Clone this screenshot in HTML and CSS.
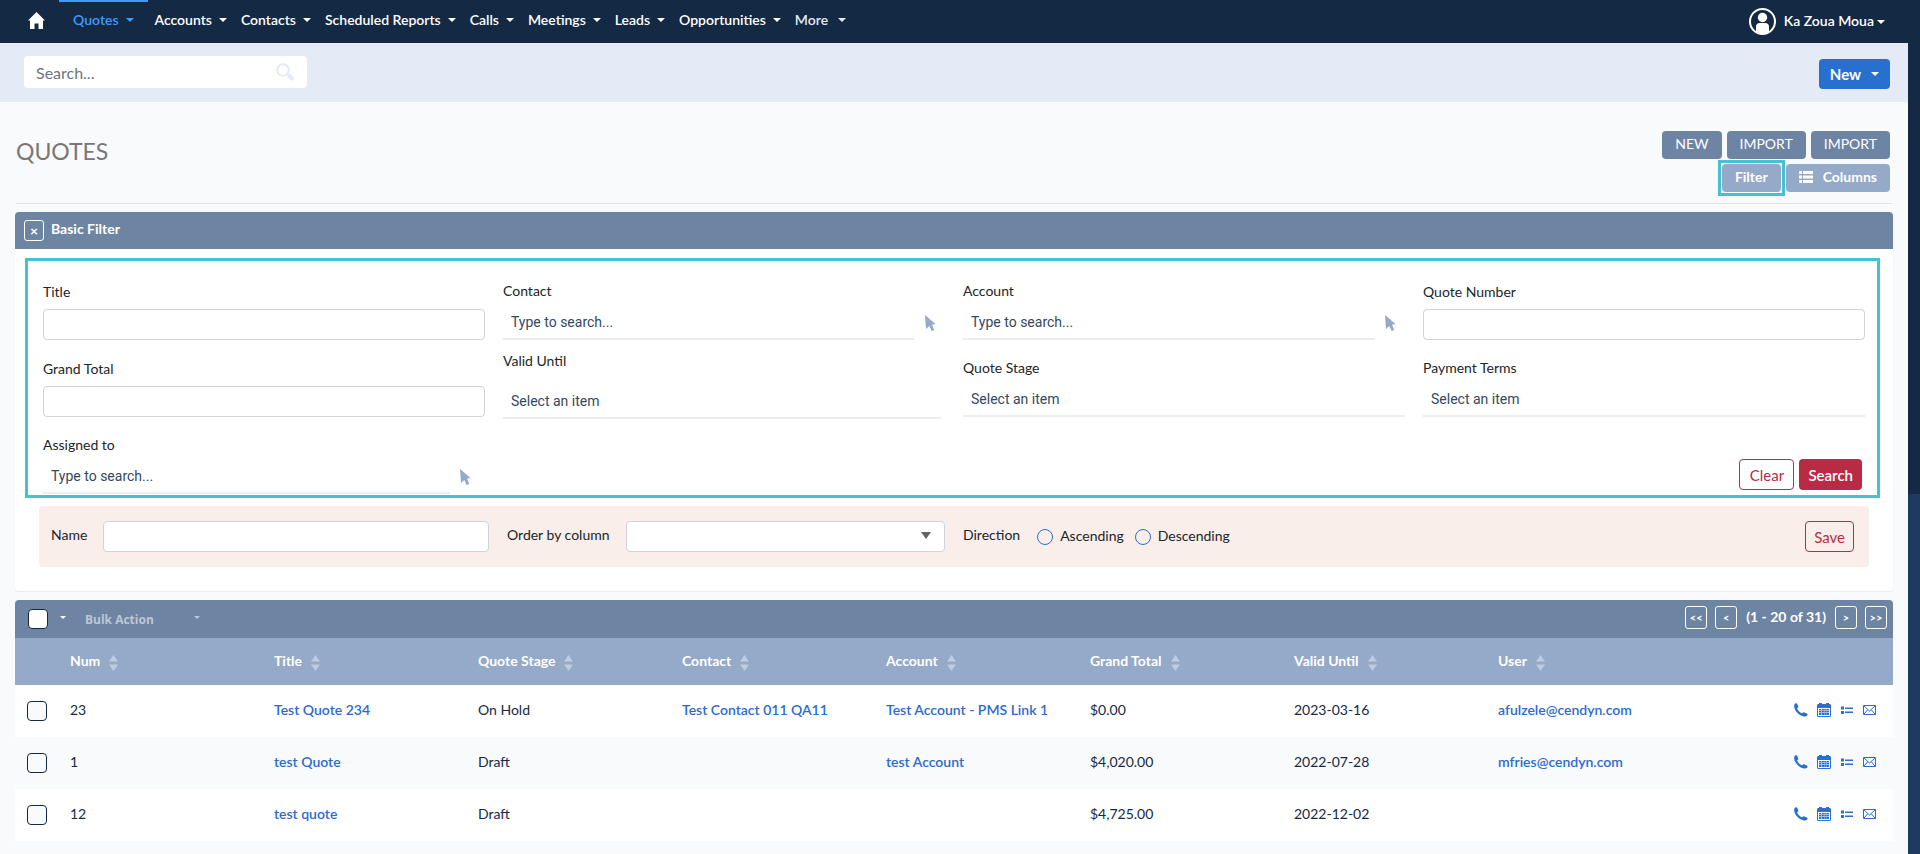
FILE: index.html
```html
<!DOCTYPE html>
<html lang="en">
<head>
    <meta charset="UTF-8">
    <meta name="viewport" content="width=device-width, initial-scale=1.0">
    <title>Quotes</title>
    <link rel="stylesheet" href="styles.css">
</head>
<body>
    <svg class="sprite" aria-hidden="true">
        <symbol id="icon-phone" viewBox="0 0 14 14"><path d="M1.2 .5C2 0 2.900 0 3.300 .9l.9 2.300c.3.800 0 1.300-.7 1.700-.4.300-.4.700-.2 1.200.9 1.800 2.200 3.100 4 4 .5.300.9.200 1.200-.2.500-.7 1-.9 1.800-.5l2.600 1.200c.9.400.9 1.100.3 1.800-.9 1.100-2.400 1.300-4 .9C4.800 12.200 1 8 .2 4 0 2.500.2 1.200 1.200.5z"/></symbol>
        <symbol id="icon-calendar" viewBox="0 0 14 14"><path fill-rule="evenodd" d="M1 1h1V0h3v1h4V0h3v1h1l1 1v11l-1 1H1l-1-1V2zM1 5v8h12V5z"/><path opacity=".45" d="M2 6h10v6H2z"/><path d="M2 6h2v1H2zm3 0h2v1H5zm2.500 0h2v1h-2zM10 6h2v1h-2zM2 8h2v1H2zm3 0h2v1H5zm2.500 0h2v1h-2zM10 8h2v1h-2zM2 10h2v2H2zm3 0h2v2H5zm2.500 0h2v2h-2zM10 10h2v2h-2z"/></symbol>
        <symbol id="icon-tasks" viewBox="0 0 14 14"><path d="M1 3.500h3v3H1zM1 8h3v3H1zM5 4.500h8v1.500H5zM5 8.500h8V10H5z"/></symbol>
        <symbol id="icon-mail" viewBox="0 0 14 14"><path fill="none" stroke="currentColor" d="M.5 2.500h12v9H.5zM1 3l5.500 5L12 3M1 11l3.500-4M12 11L8.500 7"/></symbol>
        <symbol id="icon-pointer" viewBox="0 0 11 16"><path d="M0 0l10.500 9-3.500.700L9.300 15l-2.700 1L4.300 11 1 14z"/></symbol>
        <symbol id="icon-sort" viewBox="0 0 9 16"><path d="M4.500 0L9 6.500H0zM4.500 16L9 9.500H0z"/></symbol>
    </svg>

    <nav class="navbar">
        <a class="home" href="#" aria-label="Home">
            <svg width="17" height="17" viewBox="0 0 17 17"><path fill="#fff" d="M8.500 0L17 8.500h-2V17h-4.500v-5.500h-4V17H2V8.500H0z"/></svg>
        </a>
        <a class="nav-link active" href="#">Quotes<span class="caret"></span></a>
        <a class="nav-link" href="#">Accounts<span class="caret"></span></a>
        <a class="nav-link" href="#">Contacts<span class="caret"></span></a>
        <a class="nav-link" href="#">Scheduled Reports<span class="caret"></span></a>
        <a class="nav-link" href="#">Calls<span class="caret"></span></a>
        <a class="nav-link" href="#">Meetings<span class="caret"></span></a>
        <a class="nav-link" href="#">Leads<span class="caret"></span></a>
        <a class="nav-link" href="#">Opportunities<span class="caret"></span></a>
        <a class="nav-link more" href="#">More<span class="caret"></span></a>
        <a class="user" href="#">
            <svg width="27" height="27" viewBox="0 0 27 27"><circle cx="13.500" cy="13.500" r="12.500" fill="none" stroke="#fff" stroke-width="2"/><circle cx="13.500" cy="9.500" r="4.700" fill="#fff"/><path fill="#fff" d="M7 24v-5q0-4 4-4h5q4 0 4 4v5q-6.500 4-13 0z"/></svg>
            <span>Ka Zoua Moua</span><span class="caret"></span>
        </a>
    </nav>

    <div class="page">
        <div class="content">
            <div class="search-bar">
                <div class="search-box">
                    <input type="text" placeholder="Search..." aria-label="Search">
                    <svg width="19" height="18" viewBox="0 0 19 18"><circle cx="7" cy="7" r="5.800" fill="none" stroke="#e4eaf6" stroke-width="2"/><path stroke="#e4eaf6" stroke-width="4" stroke-linecap="round" d="M13.500 13l2.500 2.500"/></svg>
                </div>
                <button class="btn btn-new">New<span class="caret"></span></button>
            </div>

            <main>
                <div class="title-row">
                    <h1>QUOTES</h1>
                    <div class="actions">
                        <div class="action-row">
                            <button class="btn btn-slate">NEW</button>
                            <button class="btn btn-slate">IMPORT</button>
                            <button class="btn btn-slate">IMPORT</button>
                        </div>
                        <div class="action-row">
                            <div class="highlighted">
                                <button class="btn btn-light">Filter</button>
                            </div>
                            <button class="btn btn-light">
                                <svg width="14" height="12" viewBox="0 0 14 12" fill="#fff"><path d="M0 0h3v3H0zM4 0h10v3H4zM0 4.500h3v3H0zM4 4.500h10v3H4zM0 9h3v3H0zM4 9h10v3H4z"/></svg>Columns
                            </button>
                        </div>
                    </div>
                </div>

                <section class="panel">
                    <div class="panel-header">
                        <button class="btn-square" aria-label="Close">×</button>
                        <h2>Basic Filter</h2>
                    </div>
                    <form class="filter-form">
                        <div class="field-grid">
                            <div class="field">
                                <label for="title">Title</label>
                                <input type="text" id="title">
                            </div>
                            <div class="field field-line">
                                <label for="contact">Contact</label>
                                <div class="lookup">
                                    <input type="text" id="contact" placeholder="Type to search...">
                                    <svg width="11" height="16"><use href="#icon-pointer"/></svg>
                                </div>
                            </div>
                            <div class="field field-line">
                                <label for="account">Account</label>
                                <div class="lookup">
                                    <input type="text" id="account" placeholder="Type to search...">
                                    <svg width="11" height="16"><use href="#icon-pointer"/></svg>
                                </div>
                            </div>
                            <div class="field">
                                <label for="quote-number">Quote Number</label>
                                <input type="text" id="quote-number">
                            </div>
                            <div class="field">
                                <label for="grand-total">Grand Total</label>
                                <input type="text" id="grand-total">
                            </div>
                            <div class="field field-line field-date">
                                <label for="valid-until">Valid Until</label>
                                <input type="text" id="valid-until" placeholder="Select an item">
                            </div>
                            <div class="field field-line">
                                <label for="quote-stage">Quote Stage</label>
                                <input type="text" id="quote-stage" placeholder="Select an item">
                            </div>
                            <div class="field field-line">
                                <label for="payment-terms">Payment Terms</label>
                                <input type="text" id="payment-terms" placeholder="Select an item">
                            </div>
                            <div class="field field-line">
                                <label for="assigned-to">Assigned to</label>
                                <div class="lookup lookup-wide">
                                    <input type="text" id="assigned-to" placeholder="Type to search...">
                                    <svg width="11" height="16"><use href="#icon-pointer"/></svg>
                                </div>
                            </div>
                            <div class="form-buttons">
                                <button type="button" class="btn btn-outline btn-clear">Clear</button>
                                <button type="button" class="btn btn-red">Search</button>
                            </div>
                        </div>

                        <div class="save-row">
                            <div class="save-cell">
                                <label for="name">Name</label>
                                <input type="text" id="name">
                            </div>
                            <div class="save-cell">
                                <label for="order-by">Order by column</label>
                                <div class="select-wrap">
                                    <select id="order-by"><option></option></select>
                                </div>
                            </div>
                            <div class="save-cell direction">
                                <span class="direction-label">Direction</span>
                                <input type="radio" name="direction" id="asc"><label for="asc">Ascending</label>
                                <input type="radio" name="direction" id="desc"><label for="desc">Descending</label>
                            </div>
                            <div class="save-cell save-end">
                                <button type="button" class="btn btn-outline">Save</button>
                            </div>
                        </div>
                    </form>
                </section>

                <section class="list">
                    <div class="list-toolbar">
                        <input type="checkbox" aria-label="Select all">
                        <span class="caret small"></span>
                        <button class="bulk">Bulk Action<span class="caret small"></span></button>
                        <div class="pagination">
                            <button class="btn-square" aria-label="First page">&lt;&lt;</button>
                            <button class="btn-square" aria-label="Previous page">&lt;</button>
                            <span class="page-count">(1 - 20 of 31)</span>
                            <button class="btn-square" aria-label="Next page">&gt;</button>
                            <button class="btn-square" aria-label="Last page">&gt;&gt;</button>
                        </div>
                    </div>
                    <table>
                        <thead>
                            <tr>
                                <th class="col-check"></th>
                                <th>Num<svg width="9" height="16"><use href="#icon-sort"/></svg></th>
                                <th>Title<svg width="9" height="16"><use href="#icon-sort"/></svg></th>
                                <th>Quote Stage<svg width="9" height="16"><use href="#icon-sort"/></svg></th>
                                <th>Contact<svg width="9" height="16"><use href="#icon-sort"/></svg></th>
                                <th>Account<svg width="9" height="16"><use href="#icon-sort"/></svg></th>
                                <th>Grand Total<svg width="9" height="16"><use href="#icon-sort"/></svg></th>
                                <th>Valid Until<svg width="9" height="16"><use href="#icon-sort"/></svg></th>
                                <th>User<svg width="9" height="16"><use href="#icon-sort"/></svg></th>
                                <th class="col-icons"></th>
                            </tr>
                        </thead>
                        <tbody>
                            <tr>
                                <td><input type="checkbox" aria-label="Select quote 23"></td>
                                <td>23</td>
                                <td><a href="#">Test Quote 234</a></td>
                                <td>On Hold</td>
                                <td><a href="#">Test Contact 011 QA11</a></td>
                                <td><a href="#">Test Account - PMS Link 1</a></td>
                                <td>$0.00</td>
                                <td>2023-03-16</td>
                                <td><a href="#">afulzele@cendyn.com</a></td>
                                <td>
                                    <div class="row-icons">
                                        <a href="#" aria-label="Call"><svg><use href="#icon-phone"/></svg></a>
                                        <a href="#" aria-label="Meeting"><svg><use href="#icon-calendar"/></svg></a>
                                        <a href="#" aria-label="Task"><svg><use href="#icon-tasks"/></svg></a>
                                        <a href="#" aria-label="Email"><svg><use href="#icon-mail"/></svg></a>
                                    </div>
                                </td>
                            </tr>
                            <tr>
                                <td><input type="checkbox" aria-label="Select quote 1"></td>
                                <td>1</td>
                                <td><a href="#">test Quote</a></td>
                                <td>Draft</td>
                                <td></td>
                                <td><a href="#">test Account</a></td>
                                <td>$4,020.00</td>
                                <td>2022-07-28</td>
                                <td><a href="#">mfries@cendyn.com</a></td>
                                <td>
                                    <div class="row-icons">
                                        <a href="#" aria-label="Call"><svg><use href="#icon-phone"/></svg></a>
                                        <a href="#" aria-label="Meeting"><svg><use href="#icon-calendar"/></svg></a>
                                        <a href="#" aria-label="Task"><svg><use href="#icon-tasks"/></svg></a>
                                        <a href="#" aria-label="Email"><svg><use href="#icon-mail"/></svg></a>
                                    </div>
                                </td>
                            </tr>
                            <tr>
                                <td><input type="checkbox" aria-label="Select quote 12"></td>
                                <td>12</td>
                                <td><a href="#">test quote</a></td>
                                <td>Draft</td>
                                <td></td>
                                <td></td>
                                <td>$4,725.00</td>
                                <td>2022-12-02</td>
                                <td></td>
                                <td>
                                    <div class="row-icons">
                                        <a href="#" aria-label="Call"><svg><use href="#icon-phone"/></svg></a>
                                        <a href="#" aria-label="Meeting"><svg><use href="#icon-calendar"/></svg></a>
                                        <a href="#" aria-label="Task"><svg><use href="#icon-tasks"/></svg></a>
                                        <a href="#" aria-label="Email"><svg><use href="#icon-mail"/></svg></a>
                                    </div>
                                </td>
                            </tr>
                        </tbody>
                    </table>
                </section>
            </main>
        </div>
        <div class="scroll-track"><div class="scroll-thumb"></div></div>
    </div>
</body>
</html>
```
FILE: styles.css
```css
* {
    box-sizing: border-box;
}
body {
    margin: 0;
    min-height: 100vh;
    display: flex;
    flex-direction: column;
    font-family: Lato, sans-serif;
    font-size: 14px;
    line-height: 20px;
    color: #212529;
    background: #f9fafc;
}
a {
    color: #2b6bce;
    text-decoration: none;
}
button, input, select {
    font-family: inherit;
    font-size: 14px;
    margin: 0;
}
button {
    cursor: pointer;
}
svg {
    flex: none;
}
.sprite {
    display: none;
}
.caret {
    flex: none;
    width: 8px;
    border: 4px solid transparent;
    border-top-color: currentColor;
    border-bottom: 0;
}
.caret.small {
    width: 6px;
    border-width: 3px;
    border-bottom: 0;
}

/* top navigation */
.navbar {
    display: flex;
    height: 43px;
    padding-right: 35px;
    background: #142944;
}
.home {
    padding: 12px 14px 0 28px;
}
.nav-link {
    display: flex;
    align-items: center;
    gap: 7px;
    margin-right: 14px;
    padding-bottom: 4px;
    color: #fff;
    font-weight: 600;
}
.nav-link.active {
    margin-right: 7px;
    padding: 0 14px 0 14px;
    border-top: 2px solid #3c9bff;
    border-bottom: 6px solid transparent;
    color: #3c9bff;
}
.nav-link.more {
    gap: 10px;
    color: #e4eaf6;
}
.user {
    display: flex;
    align-items: center;
    gap: 3px;
    margin-left: auto;
    color: #fff;
    font-weight: 600;
}
.user span:first-of-type {
    padding-bottom: 2px;
}
.user svg {
    margin-right: 5px;
}

.page {
    display: flex;
    flex: 1;
}
.content {
    flex: 1;
    min-width: 0;
}
.scroll-track {
    display: flex;
    flex-direction: column;
    width: 12px;
    background: #142944;
}
.scroll-track::before {
    content: "";
    flex: 5;
}
.scroll-thumb {
    flex: 4;
    background: #1e3a5f;
}

.search-bar {
    display: flex;
    justify-content: space-between;
    align-items: center;
    height: 59px;
    padding: 0 18px 0 24px;
    background: #e4eaf6;
}
.search-box {
    display: flex;
    align-items: center;
    width: 283px;
    height: 32px;
    padding: 0 12px;
    margin-bottom: 1px;
    border-radius: 4px;
    background: #fff;
}
.search-box input {
    flex: 1;
    min-width: 0;
    padding: 0;
    border: 0;
    font-size: 16px;
    background: none;
}
.search-box input::placeholder {
    color: #6c757d;
}

.btn {
    display: flex;
    align-items: center;
    justify-content: center;
    border: 1px solid transparent;
    border-radius: 4px;
    color: #fff;
    font-size: 15px;
    line-height: 20px;
    white-space: nowrap;
}
.btn-new {
    gap: 10px;
    height: 30px;
    min-width: 71px;
    margin-top: 3px;
    background: #2870d0;
    font-weight: 700;
}

main {
    padding: 0 15px;
}
.title-row {
    display: flex;
    justify-content: space-between;
    height: 102px;
    margin: 0 1px;
    border-bottom: 1px solid #dee2e6;
}
.title-row h1 {
    margin: 34px 0 0;
    font-size: 23px;
    font-weight: 400;
    line-height: 30px;
    color: #777;
}
.actions {
    display: flex;
    flex-direction: column;
    gap: 5px;
    padding: 29px 2px 0 0;
}
.action-row {
    display: flex;
    justify-content: flex-end;
    gap: 5px;
}
.btn-slate, .btn-light {
    height: 28px;
    padding: 0 12px 2px;
    font-size: 14px;
}
.btn-slate {
    background: #6e84a3;
}
.btn-light {
    gap: 10px;
    background: #95a9c9;
    font-weight: 700;
}
.highlighted {
    margin: -4px;
    padding: 1px;
    border: 3px solid #44c2d4;
}

/* filter panel */
.panel {
    margin-top: 8px;
    padding-bottom: 24px;
    border-radius: 4px;
    background: #fff;
    box-shadow: 0 1px 1px #e8eaee;
}
.panel-header {
    display: flex;
    align-items: center;
    gap: 7px;
    height: 37px;
    padding: 0 9px;
    border-radius: 4px 4px 0 0;
    background: #6e84a3;
}
.panel-header h2 {
    margin: 0 0 4px;
    font-size: 14px;
    font-weight: 700;
    color: #fff;
}
.btn-square {
    min-width: 22px;
    height: 23px;
    padding: 0 3px;
    border: 1px solid #fff;
    border-radius: 3px;
    background: none;
    color: #fff;
    font-size: 11px;
    font-weight: 700;
}
.panel-header .btn-square {
    min-width: 20px;
    height: 21px;
    font-size: 14px;
    line-height: 14px;
}
.filter-form {
    padding: 9px 13px 0 10px;
}
.field-grid {
    display: grid;
    grid-template-columns: repeat(4, 1fr);
    grid-template-rows: 77px 77px 60px;
    column-gap: 18px;
    padding: 20px 12px 0 15px;
    border: 3px solid #44c2d4;
}
.field {
    display: flex;
    flex-direction: column;
    gap: 7px;
    padding-top: 1px;
}
.field input, .save-cell > input[type="text"], select {
    width: 100%;
    height: 31px;
    padding: 0 8px;
    border: 1px solid #ced4da;
    border-radius: 4px;
    background: #fff;
}
.field-line {
    gap: 5px;
    padding-top: 0;
}
.field-line input {
    height: 34px;
    border: 0;
    border-bottom: 2px solid #ededed;
    border-radius: 0;
    font-family: Roboto, sans-serif;
}
.field-line input::placeholder {
    color: #34495e;
}
.field-date {
    gap: 14px;
    margin: -7px 4px 0 0;
}
.lookup {
    display: flex;
    align-items: center;
    gap: 10px;
    padding-right: 9px;
    fill: #95a9c9;
}
.lookup-wide {
    padding-right: 14px;
}
.form-buttons {
    grid-column: 4;
    display: flex;
    justify-content: flex-end;
    align-items: flex-end;
    gap: 5px;
    padding: 0 3px 5px 0;
}
.btn-outline, .btn-red {
    height: 31px;
    padding: 0 8px;
}
.btn-outline {
    border-color: #b92b45;
    background: none;
    color: #b92b45;
}
.btn-clear {
    min-width: 55px;
}
.btn-red {
    background: #b92b45;
    font-weight: 600;
}

.save-row {
    display: grid;
    grid-template-columns: repeat(4, 1fr);
    column-gap: 18px;
    margin: 8px 11px 0 14px;
    padding: 15px 12px;
    border-radius: 4px;
    background: #f9eeea;
}
.save-cell {
    display: flex;
    align-items: center;
    gap: 16px;
    white-space: nowrap;
}
.save-cell label, .direction-label {
    padding-bottom: 3px;
}
.select-wrap {
    position: relative;
    flex: 1;
}
.select-wrap::after {
    content: "";
    position: absolute;
    right: 14px;
    top: 11px;
    border: 5px solid transparent;
    border-top: 7px solid #5f6368;
    border-bottom: 0;
    pointer-events: none;
}
select {
    display: block;
    appearance: none;
}
.direction {
    gap: 7px;
}
.direction-label {
    margin-right: 10px;
}
.direction label {
    margin-right: 4px;
    padding-bottom: 1px;
}
.direction input {
    appearance: none;
    width: 16px;
    height: 16px;
    border: 1px solid #2870d0;
    border-radius: 50%;
}
.save-end {
    justify-content: flex-end;
    padding-right: 3px;
}

/* list view */
.list {
    margin-top: 9px;
}
.list-toolbar {
    display: flex;
    align-items: center;
    height: 38px;
    padding: 0 6px 0 13px;
    border-radius: 4px 4px 0 0;
    background: #6e84a3;
    color: #fff;
}
input[type="checkbox"] {
    appearance: none;
    display: block;
    width: 20px;
    height: 20px;
    border: 1px solid #142944;
    border-radius: 4px;
    background: #f9fafc;
}
.list-toolbar input[type="checkbox"] {
    background: #fff;
}
.list-toolbar .caret {
    margin-bottom: 3px;
}
.list-toolbar > .caret {
    margin-left: 12px;
    margin-right: 19px;
}
.bulk {
    display: flex;
    align-items: center;
    gap: 40px;
    padding: 0;
    border: 0;
    background: none;
    color: #bcc7d5;
    font-family: "Open Sans", sans-serif;
    font-size: 12px;
    font-weight: 700;
}
.pagination {
    display: flex;
    align-items: center;
    gap: 8px;
    margin-left: auto;
    padding-bottom: 3px;
}
.page-count {
    padding: 0 1px 2px;
    font-weight: 700;
}
table {
    width: 100%;
    border-collapse: collapse;
    table-layout: fixed;
}
th, td {
    padding: 0 0 2px;
    text-align: left;
    white-space: nowrap;
}
th {
    height: 47px;
    background: #95a9c9;
    color: #fff;
    font-weight: 700;
}
th svg {
    margin: 0 0 -5px 9px;
    fill: #bfcbdf;
}
td {
    height: 52px;
    color: #142944;
}
td a {
    font-weight: 600;
}
tbody tr {
    background: #fff;
}
tbody tr:nth-child(even) {
    background: #f9fafc;
}
.col-check {
    width: 55px;
}
.col-icons {
    width: 191px;
}
td:first-child {
    padding: 0 0 0 12px;
}
.row-icons {
    display: flex;
    justify-content: flex-end;
    gap: 9px;
    padding-right: 16px;
}
.row-icons a, .row-icons svg {
    display: block;
    width: 14px;
    height: 14px;
    fill: #2870d0;
}
```
